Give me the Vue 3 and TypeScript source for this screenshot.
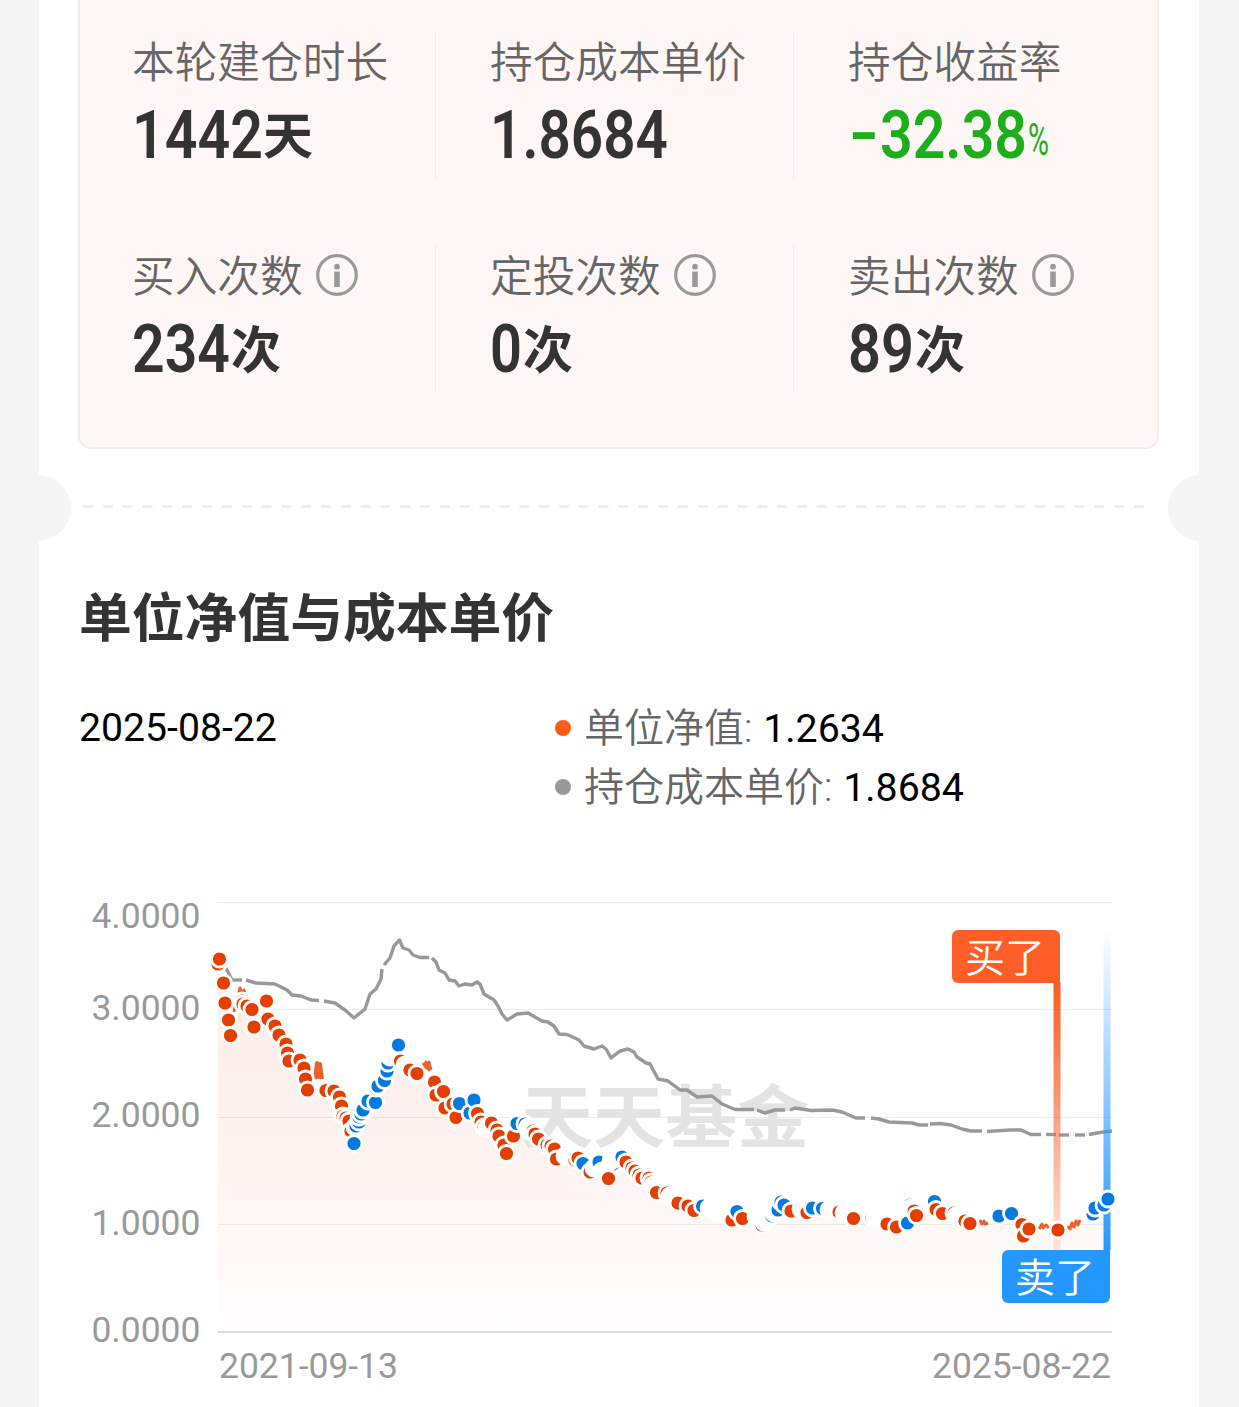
<script setup lang="ts">
interface Run { t: string; x: number; w: number; cls: string; dy?: number }
interface Stat { label: string; info: boolean; runs: Run[] }

const rows: Stat[][] = [
  [
    { label: '本轮建仓时长', info: false, runs: [{ t: '1442', x: 0, w: 131, cls: 'num' }, { t: '天', x: 131, w: 50, cls: 'han', dy: -4 }] },
    { label: '持仓成本单价', info: false, runs: [{ t: '1.8684', x: 0, w: 178, cls: 'num' }] },
    {
      label: '持仓收益率',
      info: false,
      runs: [
        { t: '-', x: 1, w: 30, cls: 'num green', dy: -2 },
        { t: '32.38', x: 32, w: 147, cls: 'num green' },
        { t: '%', x: 180, w: 21, cls: 'pct green', dy: -3 },
      ],
    },
  ],
  [
    { label: '买入次数', info: true, runs: [{ t: '234', x: 0, w: 98, cls: 'num' }, { t: '次', x: 99, w: 50, cls: 'han', dy: -4 }] },
    { label: '定投次数', info: true, runs: [{ t: '0', x: 0, w: 32, cls: 'num' }, { t: '次', x: 33, w: 50, cls: 'han', dy: -4 }] },
    { label: '卖出次数', info: true, runs: [{ t: '89', x: 0, w: 66, cls: 'num' }, { t: '次', x: 67, w: 50, cls: 'han', dy: -4 }] },
  ],
]

const yAxis = [
  { t: '4.0000', y: 928, line: 902.5 },
  { t: '3.0000', y: 1020, line: 1009.5 },
  { t: '2.0000', y: 1127, line: 1117.5 },
  { t: '1.0000', y: 1235, line: 1224.5 },
  { t: '0.0000', y: 1342, line: 1332 },
]

const costSegments: string[] = [
  '226,968 229,974 232,980 242,980',
  '246,980 256,983 275,984 287,990 292,995 301,996 311,1000 319,1000.5',
  '324,1001 335,1003 345,1010 354,1018 365,1009 370,994 376,989 381,979 382,969',
  '384,965 390,958 394,946 399.5,940 403,948 409,950 413,955 420,957.5 429,957.5',
  '432,958 436,962 439,970 445,973 449,980 455,981 459,986 465,984 472,985 477,982 480,984 484,994 494,1000 498,1006 502,1014 507,1020 517,1014 528,1013 542,1021 548,1022 554,1026 559,1034 567,1034.5 579,1040 584,1046 594,1049 602,1046 606,1049 611,1058 620,1051 628,1049 634,1052 637,1057 646,1063 650,1064 658,1079 668,1081 680,1090 687,1090 697,1097 712,1096 722,1104 735,1109.5 754,1109.5',
  '757,1110 765,1113 775,1110 785,1110',
  '790,1110 795,1108 811,1110.5 832,1110 842,1112 856,1118 865,1118',
  '871,1118 879,1119 889,1122 912,1123 919,1125 928,1125',
  '930,1124 940,1123.5 951,1125 962,1129 971,1131 982,1131',
  '987,1131.5 1010,1130 1021,1130 1031,1134.5 1041,1134.5',
  '1046,1134.5 1056,1134.5',
  '1059,1135 1069,1135',
  '1075,1135 1085,1135',
  '1089,1134.5 1100,1132.5 1112,1131',
]

/* b = buy, s = sell, w = ring only */
type Kind = 'b' | 's' | 'w'
const trades: [number, number, Kind][] = [
  [218, 964, 'b'], [219.5, 959, 'b'], [223.5, 983, 'b'], [225, 1003, 'b'], [228.5, 1020, 'b'], [230.5, 1035.5, 'b'],
  [242, 1001, 'b'], [243, 1004, 'b'], [247, 1006, 'b'], [252, 1009.5, 'b'], [254, 1027, 'b'], [266.5, 1001, 'b'],
  [268, 1019, 'b'], [275, 1026, 'b'], [279, 1035, 'b'], [286, 1044, 'b'], [287.5, 1053, 'b'], [289, 1061, 'b'],
  [300, 1060, 'b'], [304, 1068, 'b'], [305.5, 1079, 'b'], [307.5, 1090, 'b'], [326, 1090.5, 'b'], [334, 1091, 'b'],
  [339.5, 1097, 'b'], [341.5, 1106, 'b'], [343, 1116, 'b'], [346, 1118, 'b'], [349, 1121, 'b'], [351, 1131, 'b'],
  [355, 1127, 's'], [354, 1143.5, 's'], [356, 1126, 's'], [359, 1122, 's'], [359, 1117, 's'], [361, 1114, 's'], [363, 1110, 's'],
  [368, 1101, 's'], [375.5, 1102.5, 's'], [376, 1088, 's'], [378, 1086, 's'], [384.5, 1080.5, 's'], [387, 1071, 's'],
  [388, 1063, 's'], [390, 1057, 'w'], [391, 1056, 's'], [392, 1054, 'w'], [398.5, 1045, 's'],
  [400.5, 1061, 'b'], [405, 1065, 'b'], [407, 1067, 'w'], [410, 1070, 'b'], [417, 1073.5, 'b'],
  [434.5, 1082, 'b'], [436, 1095, 'b'], [443.5, 1091.5, 'b'], [445, 1108, 'b'], [453, 1104, 'b'], [456, 1117.5, 'b'],
  [459.5, 1103.5, 's'], [470, 1113, 's'], [474, 1100, 's'], [477.5, 1113.5, 'b'], [481, 1122, 'b'],
  [484, 1127, 'b'], [487, 1128, 'w'], [491.5, 1123, 'b'], [497, 1130, 'b'], [499, 1136, 'b'], [504, 1145, 'b'],
  [513.5, 1136, 'b'], [506.5, 1153.5, 'b'], [517, 1123.5, 's'], [525, 1124, 's'], [528, 1127, 'w'], [533, 1131, 'b'], [535, 1134, 'b'],
  [538.5, 1139, 'b'], [547, 1145, 'b'], [551, 1146, 'b'], [554.5, 1149, 'b'], [556.5, 1159, 'b'],
  [565, 1156, 'w'], [574, 1158, 'b'], [575, 1160, 'b'], [578, 1158, 'b'], [583, 1163.5, 's'], [590, 1172, 'b'], [594, 1168, 'w'],
  [599, 1162, 's'], [602, 1171, 'w'], [613, 1164, 's'], [611, 1161, 'w'], [608.5, 1178.5, 'b'], [622, 1157, 's'], [626, 1162, 'b'],
  [632, 1168, 'b'], [635, 1171, 'b'], [639, 1175, 'b'], [642, 1178, 'b'], [649, 1178, 'b'], [651, 1182, 'b'],
  [653, 1185, 'w'], [656.5, 1192.5, 'b'], [667, 1193, 'b'], [670, 1196, 'w'], [678, 1203, 'b'], [688, 1206, 'b'],
  [694, 1210.5, 'b'], [702.5, 1206, 's'], [709, 1208, 'w'], [717, 1212, 'w'], [725, 1214, 'w'], [732, 1220, 'b'],
  [737, 1211.5, 's'], [742.5, 1218.5, 'b'], [756, 1216.5, 'b'], [757, 1218, 'w'], [762, 1225, 'b'], [764, 1222, 's'],
  [766, 1220, 's'], [768, 1219, 'w'], [772, 1216, 's'], [774, 1213, 'w'], [778, 1210, 's'], [781, 1202, 's'], [784, 1205, 's'], [791, 1211, 'b'],
  [801, 1209, 'b'], [803, 1211, 'w'], [807, 1212.5, 'b'], [812.5, 1208, 's'], [822.5, 1208.5, 's'], [829, 1210, 'w'],
  [839, 1212, 'b'], [844, 1213, 'w'], [853.5, 1218.5, 'b'], [872, 1218, 'b'], [875, 1218, 'w'], [887, 1224, 'b'],
  [896.5, 1227, 'b'], [907.5, 1223, 's'], [910, 1205, 'b'], [911, 1208, 'w'], [914, 1211, 'b'], [916.5, 1215.5, 'b'],
  [934.5, 1201.5, 's'], [936, 1209.5, 'b'], [942.5, 1213.5, 'b'], [954, 1213, 'b'], [956, 1216, 'w'], [965, 1221, 'b'],
  [970, 1223.5, 'b'], [999, 1216, 's'], [1011.5, 1213.5, 's'], [1022, 1224.5, 'b'], [1023.5, 1236, 'b'],
  [1029, 1229, 'b'], [1058, 1230, 'b'], [1093, 1214, 's'], [1095, 1208, 's'], [1104, 1205, 's'], [1108, 1199, 's'],
]

const colors: Record<Kind, string> = { b: '#e43f00', s: '#0479de', w: '#ffffff' }
const areaPath = 'M218,1332 L218,965 ' + trades.map(([x, y]) => `L${x},${y + 2}`).join(' ') + ' L1112,1199 L1112,1332 Z'
</script>

<template>
  <div class="page">
    <main class="sheet">
      <section class="card">
        <div v-for="(row, i) in rows" :key="i" class="row">
          <div v-for="s in row" :key="s.label" class="stat">
            <div class="label">
              <span>{{ s.label }}</span>
              <svg v-if="s.info" class="info" width="42" height="42" viewBox="0 0 42 42">
                <circle cx="21" cy="21" r="19.3" fill="none" stroke="#999" stroke-width="3.2" />
                <circle cx="21" cy="12.7" r="2.9" fill="#999" />
                <rect x="18.2" y="17.5" width="5.6" height="15.5" fill="#999" />
              </svg>
            </div>
            <svg class="value" width="240" height="80" viewBox="0 0 240 80">
              <text
                v-for="r in s.runs"
                :key="r.t"
                :x="r.x"
                :y="62 + (r.dy ?? 0)"
                :textLength="r.w"
                lengthAdjust="spacingAndGlyphs"
                :class="r.cls"
              >{{ r.t }}</text>
            </svg>
          </div>
        </div>
      </section>

      <div class="tear">
        <i class="notch"></i>
        <svg class="dash" width="1062" height="3"><line x1="0" y1="1.5" x2="1061" y2="1.5" stroke="#eee" stroke-width="3" stroke-dasharray="10 9.83" /></svg>
        <i class="notch"></i>
      </div>

      <h2 class="title">单位净值与成本单价</h2>

      <div class="legend">
        <div class="date">2025-08-22</div>
        <div class="series">
          <div class="item"><i class="dot orange"></i><span>单位净值: <b>1.2634</b></span></div>
          <div class="item"><i class="dot"></i><span>持仓成本单价: <b>1.8684</b></span></div>
        </div>
      </div>

      <svg class="chart" width="1160" height="537" viewBox="39 870 1160 537">
        <defs>
          <linearGradient id="area" gradientUnits="userSpaceOnUse" x1="0" y1="960" x2="0" y2="1332">
            <stop offset="0" stop-color="#fcebe6" />
            <stop offset="0.5" stop-color="#fdf3f0" />
            <stop offset="1" stop-color="#fffefe" />
          </linearGradient>
          <linearGradient id="buy" x1="0" y1="0" x2="0" y2="1">
            <stop offset="0" stop-color="#fb5a23" />
            <stop offset="1" stop-color="#fb5a23" stop-opacity="0.15" />
          </linearGradient>
          <linearGradient id="sell" x1="0" y1="0" x2="0" y2="1">
            <stop offset="0" stop-color="#2598ff" stop-opacity="0" />
            <stop offset="1" stop-color="#2598ff" />
          </linearGradient>
        </defs>

        <path :d="areaPath" fill="url(#area)" />
        <g v-for="a in yAxis" :key="a.t">
          <line x1="218" x2="1112" :y1="a.line" :y2="a.line" :stroke="a.line === 1332 ? '#ddd' : '#000'" :stroke-opacity="a.line === 1332 ? 1 : 0.07" :stroke-width="a.line === 1332 ? 2 : 1" />
          <text x="200.5" :y="a.y" text-anchor="end" class="axis">{{ a.t }}</text>
        </g>
        <text x="219" y="1378" textLength="179" class="axis">2021-09-13</text>
        <text x="932" y="1378" textLength="179" class="axis">2025-08-22</text>
        <text x="521" y="1142" textLength="288" lengthAdjust="spacingAndGlyphs" class="mark">天天基金</text>

        <polyline v-for="(p, i) in costSegments" :key="i" :points="p" fill="none" stroke="#999" stroke-width="3.4" stroke-linejoin="round" />

        <g fill="none" stroke="#ec622f" stroke-width="3" stroke-linejoin="round">
          <path d="M234,1012 l1,-7 l1.500,5 M238,996 l2,-8 l2,7 l2,-5 l1,5" />
          <path d="M315,1079 l2,-16 l2,14 l1,-13 l2,15" stroke-width="4" />
          <path d="M423,1063 l3,5 l0,-6 l3,8 l0,-8 l2,8" />
          <path d="M980,1220 l2,4 l2,-3 l1,3 l3,-1" />
          <path d="M1039,1229 l3,-5 l1,4 l3,-3 l3,3" />
          <path d="M1068,1226 l2,3 l2,-6 l2,4 l2,-6 l2,4 l2,-5" />
        </g>

        <rect x="1053.500" y="982" width="7" height="268" fill="url(#buy)" />
        <rect x="1103.500" y="930" width="7" height="320" fill="url(#sell)" />

        <circle v-for="(t, i) in trades" :key="i" :cx="t[0]" :cy="t[1]" r="8" :fill="colors[t[2]]" stroke="#fff" stroke-width="2.8" />

        <path d="M958,930 h96 a6,6 0 0 1 6,6 v47 h-102 a6,6 0 0 1 -6,-6 v-41 a6,6 0 0 1 6,-6 z" fill="#ff5e28" />
        <text x="965" y="972" textLength="80" class="flag">买了</text>
        <path d="M1008,1250 h102 v47 a6,6 0 0 1 -6,6 h-96 a6,6 0 0 1 -6,-6 v-41 a6,6 0 0 1 6,-6 z" fill="#2598ff" />
        <text x="1015" y="1292" textLength="80" class="flag">卖了</text>
      </svg>
    </main>
  </div>
</template>

<style>
body { margin: 0; background: #f5f5f5; }
</style>

<style scoped>
.page {
  width: 1239px;
  height: 1407px;
  overflow: hidden;
  background: #f5f5f5;
  font-family: Roboto, "Noto Sans CJK SC", sans-serif;
}
.sheet {
  box-sizing: border-box;
  width: 1160px;
  height: 1407px;
  margin-left: 39px;
  background: #fff;
  overflow: hidden;
}
.card {
  box-sizing: border-box;
  width: 1081px;
  height: 449px;
  margin-left: 39px;
  padding-top: 31px;
  background: #fff7f5;
  border: 2px solid #eee;
  border-top: 0;
  border-radius: 0 0 13px 13px;
}
.row { display: flex; height: 148px; margin-bottom: 66px; }
.stat {
  box-sizing: border-box;
  width: 358px;
  height: 148px;
  padding-left: 54px;
  border-right: 1px solid #ececec;
}
.stat:first-child { width: 356px; padding-left: 52px; }
.stat:last-child { border-right: 0; width: 360px; }
.label {
  display: flex;
  align-items: center;
  height: 56px;
  font-family: "Noto Sans CJK SC DemiLight", "Noto Sans CJK SC", sans-serif;
  font-size: 42.700px;
  font-weight: 350;
  line-height: 56px;
  color: #666;
  white-space: nowrap;
}
.info { margin: 3px 0 0 13px; }
.value { display: block; margin-top: 9px; overflow: visible; }
.value text { fill: #333; }
.value .num { font: 600 66px Roboto, sans-serif; }
.value .han { font: 700 50px "Noto Sans CJK SC", sans-serif; }
.value .pct { font: 400 45px Roboto, sans-serif; }
.value .green { fill: #1cae1c; }
.tear {
  display: flex;
  align-items: center;
  justify-content: space-between;
  height: 66px;
  margin: 26px -35px 0 -34px;
}
.notch { width: 66px; height: 66px; border-radius: 50%; background: #f5f5f5; }
.dash { margin: -3px 0 0 -12px; }
.title {
  margin: 34px 0 0 40px;
  height: 81px;
  font: 700 52.800px/78px "Noto Sans CJK SC", sans-serif;
  color: #333;
}
.legend { display: flex; height: 172px; margin: 42px 0 0 40px; }
.date { width: 476px; font-size: 39.200px; line-height: 61px; color: #000; }
.item {
  display: flex;
  align-items: center;
  height: 59px;
  font-size: 40px;
  font-weight: 350;
  line-height: 59px;
  color: #666;
  white-space: nowrap;
}
.item span { padding-top: 2px; }
.item b { font-size: 39.300px; font-weight: 400; color: #000; margin-left: 1px; }
.dot { width: 16px; height: 16px; margin-right: 13px; border-radius: 50%; background: #999; }
.dot.orange { background: #f95e18; }
.chart { display: block; }
.axis { font: 400 35.500px Roboto, sans-serif; fill: #999; }
.mark { font: 700 68px "Noto Sans CJK SC", sans-serif; fill: #e3e3e3; }
.flag { font: 350 40px "Noto Sans CJK SC", sans-serif; fill: #fff; }
</style>
